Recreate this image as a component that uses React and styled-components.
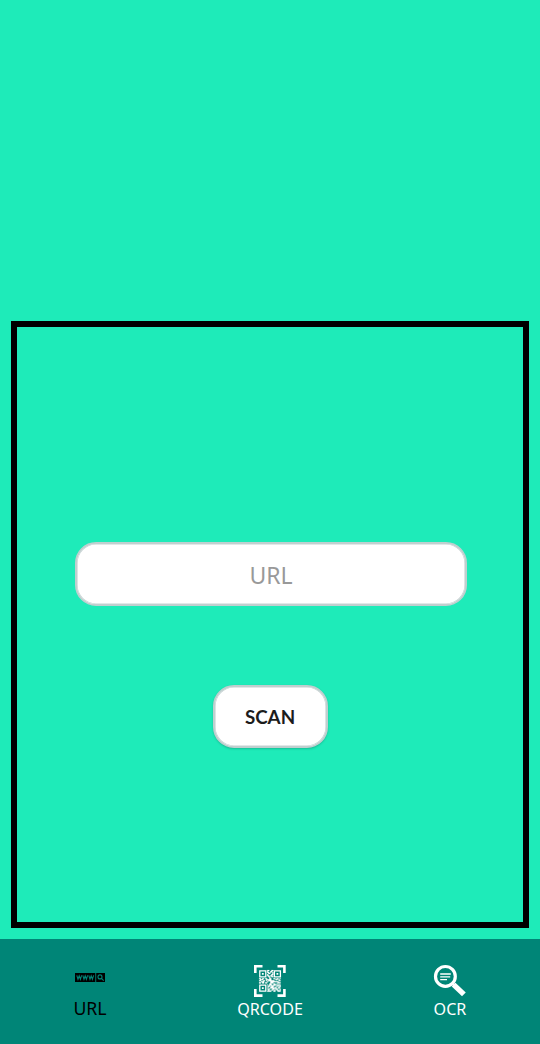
import React from 'react';
import styled, { createGlobalStyle } from 'styled-components';

const GlobalStyle = createGlobalStyle`
  * { box-sizing: border-box; }
  body { margin: 0; background: #1eebb9; }
`;

const Screen = styled.div`
  display: flex;
  flex-direction: column;
  height: 1044px;
  width: 540px;
  overflow: hidden;
  background: #1eebb9;
  font-family: 'Noto Sans', sans-serif;
`;

const Frame = styled.main`
  display: flex;
  flex-direction: column;
  align-items: center;
  flex: 1;
  margin: 321px 11px 11px;
  padding-top: 215px;
  border: 6px solid #000;
`;

const UrlInput = styled.input`
  width: 392px;
  height: 64px;
  flex: none;
  margin-left: 2px;
  padding: 2px 0 0;
  border: 2px solid #c0cfcf;
  border-radius: 21px;
  outline: none;
  background: #fff;
  box-shadow: inset 0 0 0 0.6px #c6d2d2;
  color: #222;
  text-align: center;
  font: 400 23px 'Noto Sans', sans-serif;
  &::placeholder { color: #999; opacity: 1; }
`;

const ScanButton = styled.button`
  width: 115px;
  height: 63px;
  margin: 79px 0 0 1px;
  padding: 0 1px 0 0;
  border: 2px solid #c0cfcf;
  border-radius: 21px;
  background: #fff;
  box-shadow: inset 0 0 0 0.6px #c6d2d2, 0 1px 2px rgba(0, 60, 50, 0.25);
  color: #1c1c1c;
  font: 700 18.8px Lato, sans-serif;
`;

const TabBar = styled.nav`
  display: grid;
  grid-template-columns: repeat(3, 1fr);
  height: 105px;
  flex: none;
  padding-top: 25px;
  background: #008577;
`;

const Tab = styled.div`
  display: flex;
  flex-direction: column;
  align-items: center;
  color: ${(p) => (p.$active ? '#000' : '#fff')};
`;

const TabIcon = styled.svg`
  display: block;
  width: 34px;
  height: 34px;
  flex: none;
`;

const TabLabel = styled.span`
  font-size: ${(p) => (p.$active ? 17.7 : 16.1)}px;
  line-height: ${(p) => (p.$active ? 20 : 22)}px;
`;

const QR_ROWS = [
  '0000000011001100000000',
  '0000000010011000000000',
  '0000000011010100000000',
  '0000000001100100000000',
  '0000000010001100000000',
  '0000000011011000000000',
  '0000000001101100000000',
  '0000000000100000000000',
  '1101101100110011011010',
  '0111000111110000110100',
  '1100110101111110000110',
  '0011100010011111111000',
  '1101101100011100001110',
  '0000000000110011010000',
  '0000000010111011101110',
  '0000000001101110011010',
  '0000000011011100100110',
  '0000000000011111101100',
  '0000000011100110110010',
  '0000000001001101011010',
  '0000000011110011001110',
];

const qrPath = QR_ROWS.map((row, y) =>
  [...row].map((bit, x) => (bit === '1' ? `M${x} ${y}h1v1h-1z` : '')).join('')
).join('');

const WebIcon = () => (
  <TabIcon viewBox="0 0 34 34">
    <path fill="#000" d="M2 9h20.3v9H2zM23.2 9h8.8v9h-8.8z" />
    <g fill="none" stroke="#008577" strokeWidth="1.1">
      <path d="M3.8 11.3l1.2 4 1.2-3.4 1.2 3.4 1.2-4M9.8 11.3l1.2 4 1.2-3.4 1.2 3.4 1.2-4M15.8 11.3l1.2 4 1.2-3.4 1.2 3.4 1.2-4" />
      <circle cx="27" cy="12.9" r="2" />
      <path d="M28.5 14.4l2.2 2.2" />
    </g>
  </TabIcon>
);

const QrIcon = () => (
  <TabIcon viewBox="0 0 34 34">
    <path
      fill="none"
      stroke="#fff"
      strokeWidth="2.6"
      d="M2.3 9V2.3h7.2M24.5 2.3h6.9V9M31.4 25v6.6h-6.9M9.5 31.6H2.3V25"
    />
    <g transform="translate(6 6)">
      <g fill="none" stroke="#fff" strokeWidth="1.3">
        <path d="M.8.8h6v6h-6zM15.4.8h6v6h-6zM.8 15.2h6v6h-6z" />
      </g>
      <path fill="#fff" d="M2.9 2.9h1.8v1.8H2.9zM17.5 2.9h1.8v1.8h-1.8zM2.9 17.3h1.8v1.8H2.9z" />
      <path fill="#fff" stroke="#fff" strokeWidth="0.15" transform="scale(1.03)" d={qrPath} />
    </g>
  </TabIcon>
);

const OcrIcon = () => (
  <TabIcon viewBox="0 0 34 34">
    <circle cx="12.4" cy="12.4" r="9.9" fill="none" stroke="#fff" strokeWidth="3.2" />
    <path
      fill="none"
      stroke="#fff"
      strokeWidth="1.4"
      d="M7.2 10H17.8M7.2 12.9H17.2M7.2 15.6h6.8"
    />
    <path fill="none" stroke="#fff" strokeWidth="2.6" d="M18.7 18.7l4 4" />
    <path fill="none" stroke="#fff" strokeWidth="5.4" d="M20.6 20.6l10.3 9.8" />
  </TabIcon>
);

export default function App() {
  return (
    <>
      <GlobalStyle />
      <Screen>
        <Frame>
          <UrlInput placeholder="URL" aria-label="URL" />
          <ScanButton>SCAN</ScanButton>
        </Frame>
        <TabBar>
          <Tab $active>
            <WebIcon />
            <TabLabel $active>URL</TabLabel>
          </Tab>
          <Tab>
            <QrIcon />
            <TabLabel>QRCODE</TabLabel>
          </Tab>
          <Tab>
            <OcrIcon />
            <TabLabel>OCR</TabLabel>
          </Tab>
        </TabBar>
      </Screen>
    </>
  );
}
